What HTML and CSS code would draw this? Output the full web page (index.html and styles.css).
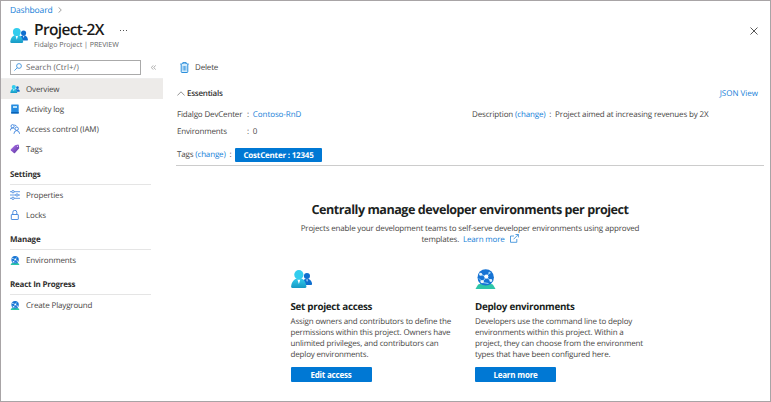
FILE: index.html
```html
<!DOCTYPE html>
<html lang="en">
<head>
<meta charset="utf-8">
<title>Project-2X</title>
<link rel="stylesheet" href="styles.css">
</head>
<body>
<svg class="defs" width="0" height="0" aria-hidden="true">
  <defs>
    <linearGradient id="cyan" x1="0" y1="0" x2="0" y2="1"><stop offset="0" stop-color="#32cdee"/><stop offset="1" stop-color="#1799c4"/></linearGradient>
    <linearGradient id="purple" x1="0" y1="0" x2="1" y2="1"><stop offset="0" stop-color="#b77af4"/><stop offset="1" stop-color="#552f99"/></linearGradient>
    <symbol id="people" viewBox="0 0 20 17">
      <circle cx="15.200" cy="5.700" r="2.900" fill="#0f6fcf"/>
      <path d="M11 14.200h8.200c.7 0 1-.5.9-1.200C19.700 10.400 18 8.300 15.200 8.300c-2 0-3.600 1-4.200 2.700z" fill="#0f6fcf"/>
      <path d="M14.600 9h1.400l-.7 2.300z" fill="#fff"/>
      <path d="M1.300 17h12.200c.8 0 1.300-.6 1.200-1.300C14.100 10.800 11.600 7.600 7.500 7.600S.7 11 .1 15.700C0 16.400.5 17 1.300 17z" fill="url(#cyan)"/>
      <circle cx="7.500" cy="4.400" r="4.400" fill="#32cdee"/>
      <path d="M6.100 8.900q1.400.5 2.800 0L7.500 13.300z" fill="#fff"/>
    </symbol>
    <symbol id="globe" viewBox="0 0 20 20">
      <path d="M0 20l2.300-4Q3 15 4.300 15h11.400q1.300 0 2 1l2.300 4z" fill="#2dc5a8"/>
      <circle cx="10.200" cy="8.400" r="8.200" fill="#1673d4"/>
      <path d="M4 4.500L10.500 8l5.500 4M10.500 8l3.800-4.500M10.500 8L7 13l-3.500-3.500M7 13.500l6 1" fill="none" stroke="#9ad5fb" stroke-width="1"/>
      <circle cx="10.800" cy="7.600" r="2.100" fill="#fff"/>
      <circle cx="6.600" cy="12.600" r="1.700" fill="#f2f7fc"/>
      <circle cx="5.200" cy="5.200" r="1.500" fill="#e0f1fd"/>
      <circle cx="15.300" cy="11.500" r="1.400" fill="#e0f1fd"/>
      <circle cx="14" cy="3.800" r="1.100" fill="#9ad5fb"/>
    </symbol>
  </defs>
</svg>
<div class="window">
  <header class="top">
    <nav class="crumbs"><a>Dashboard</a><svg width="4" height="6" viewBox="0 0 4 6"><path d="M.5.3L3.300 3 .5 5.700" fill="none" stroke="#777" stroke-width=".7"/></svg></nav>
    <div class="titlebar">
      <svg class="logo" width="18" height="15"><use href="#people"/></svg>
      <div class="names">
        <div class="title-line"><h1>Project-2X</h1><span class="more"><i></i><i></i><i></i></span></div>
        <div class="subtitle">Fidalgo Project | PREVIEW</div>
      </div>
      <svg class="close" width="8" height="8" viewBox="0 0 8 8"><path d="M.5.5l7 7m0-7l-7 7" stroke="#444" stroke-width=".9"/></svg>
    </div>
  </header>
  <div class="body">
    <aside>
      <div class="search-row">
        <div class="search"><svg width="8" height="8" viewBox="0 0 8 8" fill="none" stroke="#2b88d8" stroke-width=".8"><circle cx="5" cy="3" r="2.400"/><path d="M3.300 4.700L.4 7.600"/></svg><span>Search (Ctrl+/)</span></div>
        <svg width="5" height="5" viewBox="0 0 5 5" fill="none" stroke="#777" stroke-width=".6"><path d="M2.200.4L.4 2.500l1.800 2.100M4.600.4L2.800 2.500l1.800 2.100"/></svg>
      </div>
      <ul class="first">
        <li class="active"><svg width="10" height="8"><use href="#people"/></svg><span>Overview</span></li>
        <li><svg width="10" height="10" viewBox="0 0 10 10"><rect x="1.200" y=".5" width="7.500" height="9" rx=".5" fill="#258be0"/><path d="M1.200 8h7.500v1.500H1.200z" fill="#0b62b5"/><path d="M3 2h4v2H3z" fill="#b9e3fa"/></svg><span>Activity log</span></li>
        <li><svg width="10" height="10" viewBox="0 0 10 10" fill="none" stroke="#3b82dd" stroke-width=".9"><circle cx="2.600" cy="2.200" r="1.600"/><path d="M.3 6.500Q.4 4 2.600 4 4 4 4.600 5"/><circle cx="6.700" cy="4.700" r="1.700"/><path d="M3.900 9.800q.3-3.200 2.800-3.200t2.900 3.200M4.500.8l2 1.200"/></svg><span class="iam">Access control (IAM)</span></li>
        <li><svg width="10" height="10" viewBox="0 0 10 10"><path d="M5 1.200L8 .5q.6 0 .8.600L9.200 4.200 5 9.100q-.6.5-1.200 0L.9 6.500q-.4-.6 0-1.200z" fill="url(#purple)"/><circle cx="7.500" cy="2.300" r=".6" fill="#e8d9fa"/></svg><span>Tags</span></li>
      </ul>
      <h2>Settings</h2>
      <ul>
        <li><svg width="10" height="10" viewBox="0 0 10 10" stroke="#3b82dd" stroke-width=".8" fill="#fff"><path d="M0 1.700h10M0 5h10M0 8.300h10"/><circle cx="3" cy="1.700" r="1.200"/><circle cx="7" cy="5" r="1.200"/><circle cx="3" cy="8.300" r="1.200"/></svg><span>Properties</span></li>
        <li><svg width="10" height="10" viewBox="0 0 10 10" stroke="#3b82dd" stroke-width=".9" fill="none"><rect x="1.300" y="4.500" width="7" height="5" rx=".4"/><path d="M2.800 4.500V2.300a2 2 0 0 1 4 0v2.200"/></svg><span>Locks</span></li>
      </ul>
      <h2>Manage</h2>
      <ul><li><svg width="10" height="9"><use href="#globe"/></svg><span>Environments</span></li></ul>
      <h2>React In Progress</h2>
      <ul><li><svg width="10" height="9"><use href="#globe"/></svg><span>Create Playground</span></li></ul>
    </aside>
    <main>
      <div class="toolbar"><svg width="9" height="11" viewBox="0 0 9 11" fill="none" stroke="#1683d8" stroke-width=".9"><path d="M.3 2h8.400M2.800 2V.6h3.400V2" /><path d="M1.200 2v7.700q0 .8.800.8h5q.8 0 .8-.8V2" fill="#d5ecfb"/><path d="M3.200 4v4.500M4.500 4v4.500M5.800 4v4.500" stroke-width=".6"/></svg><span>Delete</span></div>
      <div class="ess-head"><svg width="8" height="5" viewBox="0 0 8 5"><path d="M.4 4.500L4 .8l3.600 3.700" fill="none" stroke="#666" stroke-width=".7"/></svg><b>Essentials</b><a>JSON View</a></div>
      <div class="ess">
        <dl>
          <dt>Fidalgo DevCenter</dt><dd>: <a>Contoso-RnD</a></dd>
          <dt>Environments</dt><dd>: <span class="count">0</span></dd>
        </dl>
        <p class="desc">Description <a>(change)</a> &nbsp;:&nbsp; Project aimed at increasing revenues by 2X</p>
      </div>
      <div class="tags"><span class="tag-label">Tags <a>(change)</a> &nbsp;:</span><b class="tag">CostCenter : 12345</b></div>
      <section class="hero">
        <h3>Centrally manage developer environments per project</h3>
        <p>Projects enable your development teams to self-serve developer environments using approved<br>templates. &nbsp;<a>Learn more</a><svg width="9" height="9" viewBox="0 0 9 9" fill="none" stroke="#2b88d8" stroke-width=".8"><path d="M4 2H.5v6.300h6.300V5M3.500 5.300L8.300.5M5.500.5h2.900v2.900"/></svg></p>
      </section>
      <div class="cards">
        <article>
          <svg width="21" height="17"><use href="#people"/></svg>
          <h4>Set project access</h4>
          <p>Assign owners and contributors to define the<br>permissions within this project. Owners have<br>unlimited privileges, and contributors can<br>deploy environments.</p>
          <button>Edit access</button>
        </article>
        <article>
          <svg width="21" height="20"><use href="#globe"/></svg>
          <h4>Deploy environments</h4>
          <p>Developers use the command line to deploy<br>environments within this project. Within a<br>project, they can choose from the environment<br>types that have been configured here.</p>
          <button>Learn more</button>
        </article>
      </div>
    </main>
  </div>
</div>
</body>
</html>
```
FILE: styles.css
```css
* { box-sizing: border-box; margin: 0; padding: 0; }
body { width: 771px; height: 402px; overflow: hidden; background: #fff; color: #484644; font: 8px/11px "Open Sans", "Noto Sans", sans-serif; letter-spacing: -.165px; text-rendering: geometricPrecision; }
svg { display: block; flex: none; }
.defs { position: absolute; }
a { color: #1580d8; }
span, a, b, h1, h2, h3, h4, p, dt, button { white-space: nowrap; }
.window { width: 771px; height: 402px; border: 1px solid #a8a4a6; }
.top { height: 55px; padding: 3px 12px 0 9px; }
.crumbs { display: flex; align-items: center; gap: 5px; height: 12px; font-size: 8.500px; letter-spacing: -.15px; }
.titlebar { display: flex; height: 36px; }
.logo { margin: 12px 6px 0 0; }
.names { flex: 1; padding-top: 5px; }
.title-line { display: flex; height: 19px; align-items: center; }
h1 { width: 73px; font-size: 15.500px; line-height: 17px; padding-bottom: 2px; font-weight: 600; letter-spacing: -.65px; color: #1b1a19; }
.more { display: flex; gap: 2px; margin-left: 13px; }
.more i { width: 1px; height: 1px; background: #555; }
.subtitle { font-size: 7.100px; line-height: 11px; letter-spacing: -.03px; color: #666; }
.close { margin-top: 11px; }
.body { display: flex; }
aside { width: 162px; }
.search-row { height: 23px; padding: 4px 7px 4px 9px; display: flex; align-items: center; justify-content: space-between; border-bottom: 1px solid #eee; }
.search { width: 131px; height: 15px; border: 1px solid #aaa; display: flex; align-items: center; gap: 4px; padding-left: 3px; color: #666; letter-spacing: 0; }
ul { list-style: none; }
.first { padding-bottom: 1px; }
li { height: 20px; display: flex; align-items: center; gap: 6px; padding-left: 9px; }
li svg { width: 10px; }
.first span { padding-top: 1px; }
.iam { letter-spacing: -.1px; }
.active { background: #edebe9; }
h2 { margin: 9px 12px 0 9px; height: 16px; border-bottom: 1px solid #e5e5e5; font-size: 8px; line-height: 12px; font-weight: 700; letter-spacing: -.22px; color: #323130; }
main { flex: 1; padding: 0 6px 0 13px; }
.toolbar { height: 22px; display: flex; align-items: center; gap: 6px; padding-left: 4px; }
.ess-head { margin-top: 8px; height: 14px; display: flex; align-items: center; padding: 0 6px 0 1px; gap: 2px; }
.ess-head b { font-weight: 600; letter-spacing: -.25px; color: #323130; }
.ess-head a { margin-left: auto; letter-spacing: 0; }
.ess { display: flex; height: 45px; padding: 6px 0 0 1px; }
dl { display: grid; grid-template-columns: 70px 225px; grid-auto-rows: 17px; line-height: 17px; }
dd a { margin-left: 2px; letter-spacing: -.08px; }
.count { margin-left: 2px; }
.desc { line-height: 17px; letter-spacing: -.15px; }
.tags { display: flex; height: 21px; padding: 3px 0 0 1px; border-bottom: 1px solid #ccc; }
.tag-label { width: 58px; line-height: 14px; }
.tag { width: 87px; height: 14px; border-radius: 1px; background: #0078d4; color: #fff; line-height: 16px; text-align: center; font-weight: 700; letter-spacing: -.2px; }
.hero { margin-top: 36px; text-align: center; }
h3 { font-size: 12.600px; line-height: 16px; font-weight: 700; letter-spacing: -.47px; color: #201f1e; }
.hero p { margin-top: 5px; }
.hero svg { display: inline-block; margin-left: 5px; vertical-align: -1px; }
.cards { display: flex; padding-left: 114.500px; margin-top: 24px; }
article { width: 184.500px; }
article svg { height: 20px; }
h4 { font-size: 9.800px; line-height: 14px; margin: 11px 0 2px; font-weight: 700; letter-spacing: -.29px; color: #201f1e; }
button { display: block; width: 81px; height: 15px; margin-top: 7px; border: 0; border-radius: 1px; background: #0078d4; color: #fff; font: 700 8px/16px "Open Sans", sans-serif; letter-spacing: -.2px; }
```
